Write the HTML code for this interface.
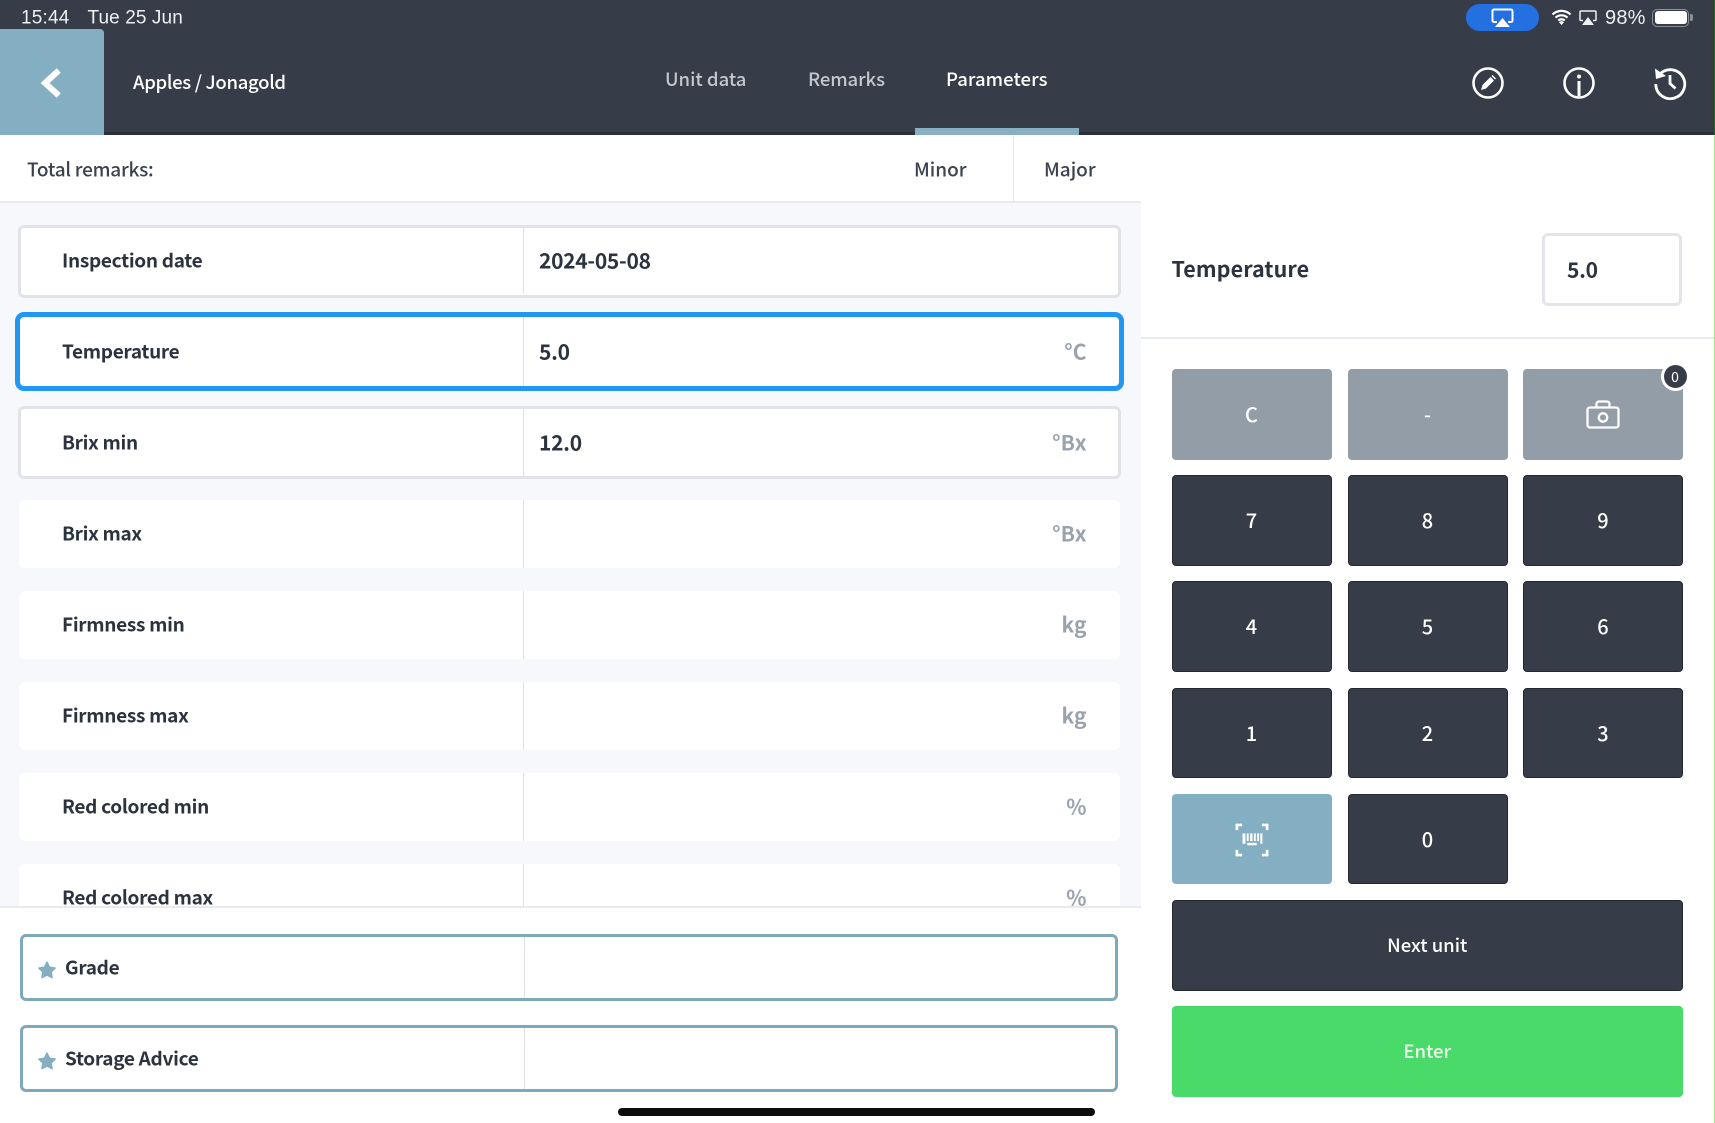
<!DOCTYPE html>
<html><head><meta charset="utf-8"><title>Parameters</title>
<style>
*{box-sizing:border-box;margin:0;padding:0}
html,body{width:1715px;height:1123px;overflow:hidden;background:#fff}
body{position:relative;font-family:"Noto Sans CJK JP","Liberation Sans",sans-serif;color:#2c333f}
.a{position:absolute}
.t{position:absolute;transform:translateY(-50%);white-space:nowrap;line-height:1.2}
.hd{left:0;top:0;width:1715px;height:135px;background:#363d48}
.row{position:absolute;left:19px;width:1101px;background:#fff;border-radius:6px}
.bd{left:18px;width:1103px;border:3px solid #e2e3e9}
.vl{position:absolute;left:523px;width:1px;background:#e0e1e8}
.lab{font-size:19px;font-weight:700;letter-spacing:-.3px;color:#2c333f}
.val{font-size:21px;font-weight:700;letter-spacing:-.3px;color:#2c333f}
.unit{font-size:21px;font-weight:700;color:#9aa3ad}
.k{position:absolute;width:160px;height:90.500px;border-radius:4px;background:#363d48;color:#fff;font-size:20px;font-weight:500;display:flex;align-items:center;justify-content:center;border:1px solid #23282f;padding-bottom:1px}
.g{background:#929da7;border-color:#929da7}
.bk{background:#84afc3;border-color:#84afc3}
.wide{width:511.500px;font-size:18.500px;padding-bottom:0}
.box2{position:absolute;left:20px;width:1098px;height:67px;border:3px solid #7fa8bb;border-radius:6px;background:#fff}
svg{position:absolute;overflow:visible}
</style></head><body>

<!-- list background -->
<div class="a" style="left:0;top:203px;width:1141px;height:704px;background:#f7f8fc"></div>
<div class="a" style="left:1141px;top:135px;width:573px;height:988px;background:#fff"></div>
<div class="a" style="left:1714px;top:135px;width:1px;height:988px;background:#9ceb82"></div>

<!-- header -->
<div class="a hd"></div>
<div class="a" style="left:0;top:132px;width:1715px;height:3px;background:#2a2f38"></div>
<div class="a" style="left:1714px;top:0;width:1px;height:135px;background:#1f6b1f"></div>
<div class="a" style="left:0;top:29px;width:104px;height:106px;background:#84afc3;border-radius:0 4px 0 0"></div>
<svg style="left:0;top:0" width="104" height="135"><path d="M56.500 72.500 L45 83 L56.500 93.500" fill="none" stroke="#fff" stroke-width="6" stroke-linecap="square" stroke-linejoin="miter"/></svg>

<div class="t" style="left:21px;top:18.500px;font-family:'Liberation Sans',sans-serif;font-size:19px;color:#eef0f2;letter-spacing:.2px">15:44</div>
<div class="t" style="left:87.500px;top:18.500px;font-family:'Liberation Sans',sans-serif;font-size:19px;color:#eef0f2;letter-spacing:.1px">Tue 25 Jun</div>
<div class="t" style="left:133px;top:82px;font-size:18.500px;font-weight:500;letter-spacing:-.3px;color:#fff">Apples / Jonagold</div>

<div class="t" style="left:665px;top:79px;font-size:18.500px;font-weight:500;color:#c3c8cd">Unit data</div>
<div class="t" style="left:808px;top:79px;font-size:18.500px;font-weight:500;letter-spacing:-.1px;color:#c3c8cd">Remarks</div>
<div class="t" style="left:946px;top:79px;font-size:18.500px;font-weight:500;letter-spacing:.05px;color:#fff">Parameters</div>
<div class="a" style="left:915px;top:128px;width:164px;height:7px;background:#88b0c0"></div>

<!-- status right -->
<div class="a" style="left:1466px;top:4px;width:73px;height:27px;border-radius:14px;background:#2470e0"></div>
<svg style="left:1491px;top:8px" width="23" height="19" viewBox="0 0 23 19"><path d="M6 14H3a1.500 1.500 0 0 1-1.500-1.500V3A1.500 1.500 0 0 1 3 1.500h17A1.500 1.500 0 0 1 21.500 3v9.500A1.500 1.500 0 0 1 20 14h-3" fill="none" stroke="#fff" stroke-width="2"/><path d="M11.500 10L19 19H4z" fill="#fff"/></svg>
<svg style="left:1551px;top:9px" width="21" height="16" viewBox="0 0 21 16"><path d="M1.500 5.500a13 13 0 0 1 18 0M4.500 8.700a8.700 8.700 0 0 1 12 0M7.300 11.500a4.700 4.700 0 0 1 6.400 0" fill="none" stroke="#fff" stroke-width="2.200"/><path d="M10.500 16l-2.500-2.800a3.500 3.500 0 0 1 5 0z" fill="#fff"/></svg>
<svg style="left:1579px;top:10px" width="18" height="15" viewBox="0 0 18 15"><path d="M4 10.500H2A1 1 0 0 1 1 9.500V2A1 1 0 0 1 2 1h14a1 1 0 0 1 1 1v7.500a1 1 0 0 1-1 1h-2" fill="none" stroke="#eef0f2" stroke-width="1.500"/><path d="M9 7l6 8H3z" fill="#eef0f2"/></svg>
<div class="t" style="left:1605px;top:18px;font-family:'Liberation Sans',sans-serif;font-size:20px;color:#eef0f2;letter-spacing:.2px">98%</div>
<div class="a" style="left:1652px;top:8.500px;width:37px;height:18px;border:1.500px solid #8a8f96;border-radius:5px"></div>
<div class="a" style="left:1654.500px;top:11px;width:32px;height:13px;background:#fff;border-radius:3px"></div>
<div class="a" style="left:1690px;top:14px;width:2.500px;height:7px;background:#8a8f96;border-radius:0 2px 2px 0"></div>

<!-- header icons -->
<svg style="left:1470px;top:65px" width="36" height="36" viewBox="0 0 36 36"><circle cx="18" cy="18" r="14.500" fill="none" stroke="#fff" stroke-width="2.600"/><path d="M11 25l1.500-5 8-8 3.500 3.500-8 8z" fill="#fff"/><path d="M21.500 11l1-1 3.500 3.500-1 1z" fill="#fff"/></svg>
<svg style="left:1561px;top:65px" width="36" height="36" viewBox="0 0 36 36"><circle cx="18" cy="18" r="14.500" fill="none" stroke="#fff" stroke-width="2.600"/><circle cx="18" cy="11.500" r="2" fill="#fff"/><path d="M18 16v15" stroke="#fff" stroke-width="3"/></svg>
<svg style="left:1652px;top:65px" width="36" height="36" viewBox="0 0 36 36"><path d="M7.500 9.500A14.500 14.500 0 1 1 3.800 19" fill="none" stroke="#fff" stroke-width="2.800"/><path d="M3 3.500l1 10.500 10-3z" fill="#fff"/><path d="M18 10v8.500l5.500 5" fill="none" stroke="#fff" stroke-width="2.800"/></svg>

<!-- remarks bar -->
<div class="a" style="left:0;top:135px;width:1141px;height:68px;background:#fff;border-bottom:2px solid #e9eaef"></div>
<div class="a" style="left:1013px;top:135px;width:1px;height:67px;background:#e4e5ea"></div>
<div class="t" style="left:27px;top:170px;font-size:19px;font-weight:500;letter-spacing:-.25px;color:#3b424d">Total remarks:</div>
<div class="t" style="left:914px;top:170px;font-size:19px;font-weight:500;color:#3b424d">Minor</div>
<div class="t" style="left:1044px;top:170px;font-size:19px;font-weight:500;color:#3b424d">Major</div>

<!-- rows -->
<div class="row bd" style="top:224.500px;height:73px"></div>
<div class="row" style="left:15px;width:1109px;top:312px;height:79px;border:5px solid #2196f3;border-radius:9px"></div>
<div class="row bd" style="top:406px;height:73px"></div>
<div class="row" style="top:500px;height:68px"></div>
<div class="row" style="top:591px;height:68px"></div>
<div class="row" style="top:682px;height:68px"></div>
<div class="row" style="top:773px;height:68px"></div>
<div class="row" style="top:864px;height:60px"></div>

<div class="vl" style="top:228px;height:66px"></div>
<div class="vl" style="top:317px;height:69px"></div>
<div class="vl" style="top:409px;height:67px"></div>
<div class="vl" style="top:500px;height:68px"></div>
<div class="vl" style="top:591px;height:68px"></div>
<div class="vl" style="top:682px;height:68px"></div>
<div class="vl" style="top:773px;height:68px"></div>
<div class="vl" style="top:864px;height:43px"></div>

<div class="t lab" style="left:62px;top:260.500px">Inspection date</div>
<div class="t lab" style="left:62px;top:351.500px">Temperature</div>
<div class="t lab" style="left:62px;top:443px">Brix min</div>
<div class="t lab" style="left:62px;top:533.500px">Brix max</div>
<div class="t lab" style="left:62px;top:624.500px">Firmness min</div>
<div class="t lab" style="left:62px;top:715.500px">Firmness max</div>
<div class="t lab" style="left:62px;top:806.500px">Red colored min</div>
<div class="t lab" style="left:62px;top:897.500px">Red colored max</div>

<div class="t val" style="left:539px;top:260.500px">2024-05-08</div>
<div class="t val" style="left:539px;top:351.500px">5.0</div>
<div class="t val" style="left:539px;top:443px">12.0</div>

<div class="t unit" style="right:628.500px;top:352px">°C</div>
<div class="t unit" style="right:628.500px;top:443px">°Bx</div>
<div class="t unit" style="right:628.500px;top:534px">°Bx</div>
<div class="t unit" style="right:628.500px;top:625px">kg</div>
<div class="t unit" style="right:628.500px;top:716px">kg</div>
<div class="t unit" style="right:628.500px;top:807px">%</div>
<div class="t unit" style="right:628.500px;top:898px">%</div>

<!-- bottom left -->
<div class="a" style="left:0;top:906px;width:1141px;height:217px;background:#fff;border-top:2px solid #e9eaef"></div>
<div class="box2" style="top:934px"></div>
<div class="box2" style="top:1025px"></div>
<div class="vl" style="left:524px;top:937px;height:61px"></div>
<div class="vl" style="left:524px;top:1028px;height:61px"></div>
<svg style="left:37px;top:960px" width="20" height="20" viewBox="0 0 18 18"><path d="M9 2l2.200 4.600 5 .7-3.600 3.500.9 5L9 13.400l-4.500 2.400.9-5L1.800 7.300l5-.7z" fill="#84afc3" stroke="#84afc3" stroke-width="1.500" stroke-linejoin="round"/></svg>
<svg style="left:37px;top:1051px" width="20" height="20" viewBox="0 0 18 18"><path d="M9 2l2.200 4.600 5 .7-3.600 3.500.9 5L9 13.400l-4.500 2.400.9-5L1.800 7.300l5-.7z" fill="#84afc3" stroke="#84afc3" stroke-width="1.500" stroke-linejoin="round"/></svg>
<div class="t lab" style="left:65px;top:968px">Grade</div>
<div class="t lab" style="left:65px;top:1059px">Storage Advice</div>

<div class="a" style="left:618px;top:1108px;width:477px;height:8px;border-radius:4px;background:#0c0c0e"></div>

<!-- right top -->
<div class="t" style="left:1171.500px;top:269px;font-size:21.500px;font-weight:700;letter-spacing:.1px;color:#2c333f">Temperature</div>
<div class="a" style="left:1542px;top:233px;width:140px;height:73px;border:3px solid #e4e5ea;border-radius:6px;background:#fff"></div>
<div class="t val" style="left:1567px;top:270px">5.0</div>
<div class="a" style="left:1141px;top:337px;width:573px;height:2px;background:#e9eaef"></div>

<!-- keypad -->
<div class="k g" style="left:1171.500px;top:369px">C</div>
<div class="k g" style="left:1347.500px;top:369px">-</div>
<div class="k g" style="left:1523px;top:369px"></div>
<svg style="left:1586px;top:400px" width="34" height="29" viewBox="0 0 34 29"><rect x="1.500" y="7.500" width="31" height="20" rx="2.500" fill="none" stroke="#fff" stroke-width="2.300"/><path d="M10.500 7.500V4a2.500 2.500 0 0 1 2.500-2.500h8A2.500 2.500 0 0 1 23.500 4v3.500" fill="none" stroke="#fff" stroke-width="2.300"/><circle cx="17" cy="17.500" r="4.200" fill="none" stroke="#fff" stroke-width="2.300"/></svg>
<div class="a" style="left:1660.500px;top:362px;width:29px;height:29px;border-radius:50%;background:#363d48;border:3px solid #fff;color:#fff;font-size:14px;display:flex;align-items:center;justify-content:center">0</div>

<div class="k" style="left:1171.500px;top:475px">7</div>
<div class="k" style="left:1347.500px;top:475px">8</div>
<div class="k" style="left:1523px;top:475px">9</div>
<div class="k" style="left:1171.500px;top:581px">4</div>
<div class="k" style="left:1347.500px;top:581px">5</div>
<div class="k" style="left:1523px;top:581px">6</div>
<div class="k" style="left:1171.500px;top:687.500px">1</div>
<div class="k" style="left:1347.500px;top:687.500px">2</div>
<div class="k" style="left:1523px;top:687.500px">3</div>
<div class="k bk" style="left:1171.500px;top:793.500px"></div>
<svg style="left:1235px;top:823px" width="34" height="34" viewBox="0 0 36 36"><path d="M2 7.500V2h5.500M28.500 2H34v5.500M2 28.500V34h5.500M28.500 34H34v-5.500" fill="none" stroke="#fff" stroke-width="2.800"/><path d="M8 11h3v11H8zM12.500 11h2v8h-2zM16 11h2.500v8H16zM20 11h2v8h-2zM23.500 11h2v8h-2zM26.800 11h2.200v11h-2.200zM13 21h10v2.500H13z" fill="#fff"/></svg>
<div class="k" style="left:1347.500px;top:793.500px">0</div>
<div class="k wide" style="left:1171.500px;top:900px">Next unit</div>
<div class="k wide" style="left:1171.500px;top:1006px;background:#4ada6a;border-color:#4ada6a;color:#e8fbe9">Enter</div>

</body></html>
